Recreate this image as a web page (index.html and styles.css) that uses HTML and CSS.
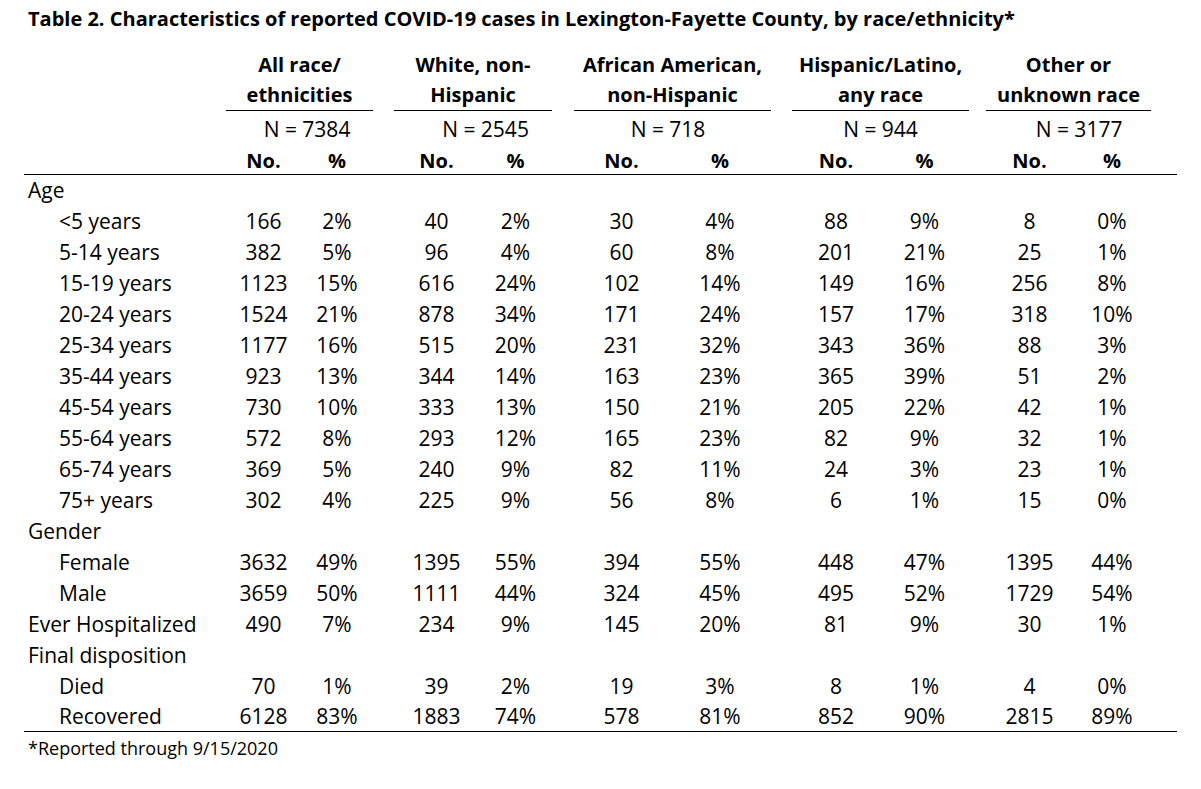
FILE: index.html
```html
<!DOCTYPE html>
<html lang="en">
<head>
<meta charset="utf-8">
<title>Table 2</title>
<link rel="stylesheet" href="styles.css">
</head>
<body>
<h1 class="title">Table 2. Characteristics of reported COVID-19 cases in Lexington-Fayette County, by race/ethnicity*</h1>
<table class="tbl">
<colgroup>
<col class="c-label">
<col class="c-no-a"><col class="c-pct-a"><col class="c-gap-a">
<col class="c-no-b"><col class="c-pct-b"><col class="c-gap-b">
<col class="c-no-c"><col class="c-pct-c"><col class="c-gap-c">
<col class="c-no-d"><col class="c-pct-d"><col class="c-gap-d">
<col class="c-no-e"><col class="c-pct-e"><col class="c-tail">
</colgroup>
<thead>
<tr class="r-group">
<th></th>
<th colspan="2" class="grp">All race/<br>ethnicities</th><th></th>
<th colspan="2" class="grp">White, non-<br>Hispanic</th><th></th>
<th colspan="2" class="grp">African American,<br>non-Hispanic</th><th></th>
<th colspan="2" class="grp">Hispanic/Latino,<br>any race</th><th></th>
<th colspan="2" class="grp">Other or<br>unknown race</th><th></th>
</tr>
<tr class="r-n">
<td></td>
<td colspan="2" class="n n-a">N = 7384</td><td></td>
<td colspan="2" class="n n-b">N = 2545</td><td></td>
<td colspan="2" class="n n-c">N = 718</td><td></td>
<td colspan="2" class="n n-d">N = 944</td><td></td>
<td colspan="2" class="n n-e">N = 3177</td><td></td>
</tr>
<tr class="r-sub">
<td></td>
<th>No.</th><th>%</th><td></td>
<th>No.</th><th>%</th><td></td>
<th>No.</th><th>%</th><td></td>
<th>No.</th><th>%</th><td></td>
<th>No.</th><th>%</th><td></td>
</tr>
</thead>
<tbody>
<tr><td class="lbl">Age</td><td colspan="15"></td></tr>
<tr><td class="lbl ind">&lt;5 years</td><td>166</td><td>2%</td><td></td><td>40</td><td>2%</td><td></td><td>30</td><td>4%</td><td></td><td>88</td><td>9%</td><td></td><td>8</td><td>0%</td><td></td></tr>
<tr><td class="lbl ind">5-14 years</td><td>382</td><td>5%</td><td></td><td>96</td><td>4%</td><td></td><td>60</td><td>8%</td><td></td><td>201</td><td>21%</td><td></td><td>25</td><td>1%</td><td></td></tr>
<tr><td class="lbl ind">15-19 years</td><td>1123</td><td>15%</td><td></td><td>616</td><td>24%</td><td></td><td>102</td><td>14%</td><td></td><td>149</td><td>16%</td><td></td><td>256</td><td>8%</td><td></td></tr>
<tr><td class="lbl ind">20-24 years</td><td>1524</td><td>21%</td><td></td><td>878</td><td>34%</td><td></td><td>171</td><td>24%</td><td></td><td>157</td><td>17%</td><td></td><td>318</td><td>10%</td><td></td></tr>
<tr><td class="lbl ind">25-34 years</td><td>1177</td><td>16%</td><td></td><td>515</td><td>20%</td><td></td><td>231</td><td>32%</td><td></td><td>343</td><td>36%</td><td></td><td>88</td><td>3%</td><td></td></tr>
<tr><td class="lbl ind">35-44 years</td><td>923</td><td>13%</td><td></td><td>344</td><td>14%</td><td></td><td>163</td><td>23%</td><td></td><td>365</td><td>39%</td><td></td><td>51</td><td>2%</td><td></td></tr>
<tr><td class="lbl ind">45-54 years</td><td>730</td><td>10%</td><td></td><td>333</td><td>13%</td><td></td><td>150</td><td>21%</td><td></td><td>205</td><td>22%</td><td></td><td>42</td><td>1%</td><td></td></tr>
<tr><td class="lbl ind">55-64 years</td><td>572</td><td>8%</td><td></td><td>293</td><td>12%</td><td></td><td>165</td><td>23%</td><td></td><td>82</td><td>9%</td><td></td><td>32</td><td>1%</td><td></td></tr>
<tr><td class="lbl ind">65-74 years</td><td>369</td><td>5%</td><td></td><td>240</td><td>9%</td><td></td><td>82</td><td>11%</td><td></td><td>24</td><td>3%</td><td></td><td>23</td><td>1%</td><td></td></tr>
<tr><td class="lbl ind">75+ years</td><td>302</td><td>4%</td><td></td><td>225</td><td>9%</td><td></td><td>56</td><td>8%</td><td></td><td>6</td><td>1%</td><td></td><td>15</td><td>0%</td><td></td></tr>
<tr><td class="lbl">Gender</td><td colspan="15"></td></tr>
<tr><td class="lbl ind">Female</td><td>3632</td><td>49%</td><td></td><td>1395</td><td>55%</td><td></td><td>394</td><td>55%</td><td></td><td>448</td><td>47%</td><td></td><td>1395</td><td>44%</td><td></td></tr>
<tr><td class="lbl ind">Male</td><td>3659</td><td>50%</td><td></td><td>1111</td><td>44%</td><td></td><td>324</td><td>45%</td><td></td><td>495</td><td>52%</td><td></td><td>1729</td><td>54%</td><td></td></tr>
<tr><td class="lbl">Ever Hospitalized</td><td>490</td><td>7%</td><td></td><td>234</td><td>9%</td><td></td><td>145</td><td>20%</td><td></td><td>81</td><td>9%</td><td></td><td>30</td><td>1%</td><td></td></tr>
<tr><td class="lbl">Final disposition</td><td colspan="15"></td></tr>
<tr><td class="lbl ind">Died</td><td>70</td><td>1%</td><td></td><td>39</td><td>2%</td><td></td><td>19</td><td>3%</td><td></td><td>8</td><td>1%</td><td></td><td>4</td><td>0%</td><td></td></tr>
<tr class="r-last"><td class="lbl ind">Recovered</td><td>6128</td><td>83%</td><td></td><td>1883</td><td>74%</td><td></td><td>578</td><td>81%</td><td></td><td>852</td><td>90%</td><td></td><td>2815</td><td>89%</td><td></td></tr>
</tbody>
</table>
<p class="note">*Reported through 9/15/2020</p>
</body>
</html>
```

FILE: styles.css
```css
html, body {
  margin: 0;
  padding: 0;
  background: #ffffff;
  color: #000000;
  font-family: "Open Sans", "Liberation Sans", sans-serif;
}

.title {
  margin: 0;
  padding-left: 28px;
  height: 38px;
  line-height: 38px;
  font-size: 20px;
  font-weight: 700;
  white-space: nowrap;
}

.tbl {
  margin: 12px 0 0 24px;
  width: 1153px;
  table-layout: fixed;
  border-collapse: collapse;
  border-spacing: 0;
  font-size: 21px;
}

.tbl th,
.tbl td {
  padding: 0;
  text-align: center;
  vertical-align: middle;
  white-space: nowrap;
}

.c-label { width: 202px; }
.c-no-a { width: 75px; }
.c-pct-a { width: 72px; }
.c-gap-a { width: 21px; }
.c-no-b { width: 85px; }
.c-pct-b { width: 73px; }
.c-gap-b { width: 22px; }
.c-no-c { width: 95px; }
.c-pct-c { width: 102px; }
.c-gap-c { width: 21px; }
.c-no-d { width: 88px; }
.c-pct-d { width: 89px; }
.c-gap-d { width: 17px; }
.c-no-e { width: 87px; }
.c-pct-e { width: 78px; }
.c-tail { width: 26px; }

.r-group th {
  font-size: 20px;
  font-weight: 700;
  line-height: 30px;
  vertical-align: bottom;
}

.r-group th.grp {
  border-bottom: 1px solid #000;
}

.r-n td {
  height: 36px;
}

.n-a { padding-left: 15px !important; }
.n-b { padding-left: 25px !important; }
.n-c { padding-right: 9px !important; }
.n-e { padding-left: 21px !important; }

.r-sub th,
.r-sub td {
  height: 26px;
  font-size: 20px;
  font-weight: 700;
  border-bottom: 1px solid #000;
}

.tbl tbody td {
  height: 31px;
  line-height: 31px;
}

.tbl tbody .r-last td {
  height: 29px;
  line-height: 29px;
  border-bottom: 1px solid #000;
}

.tbl td.lbl {
  text-align: left;
  padding-left: 4px;
}

.tbl td.lbl.ind {
  padding-left: 35px;
}

.note {
  margin: 0;
  padding-left: 28px;
  line-height: 32px;
  font-size: 18px;
}
```
